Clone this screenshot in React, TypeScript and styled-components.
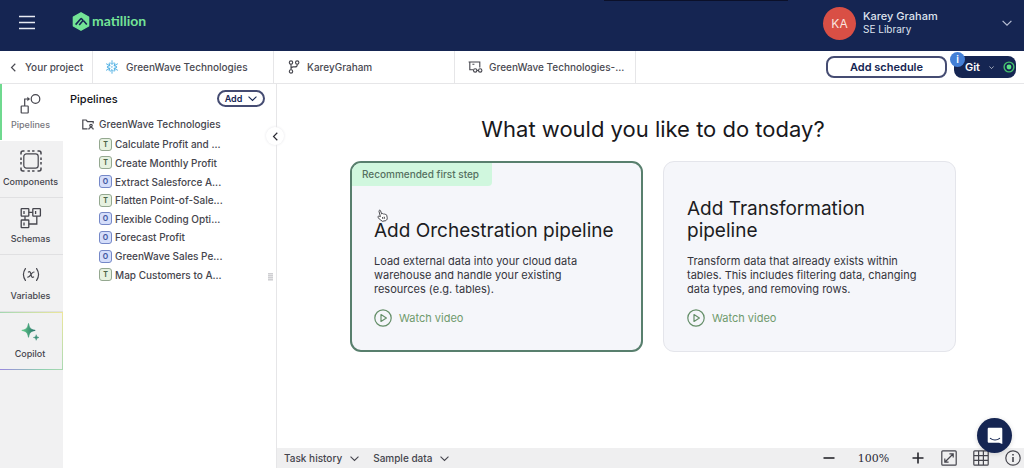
import React from "react";
import styled, { createGlobalStyle, css } from "styled-components";

const navy = "#152552";
const ink = "#2b2b35";
const line = "#e6e6e8";

const GlobalStyle = createGlobalStyle`
  *, *::before, *::after { box-sizing: border-box; }
  body { margin: 0; background: #fff; }
  body, button { font-family: Inter, "Liberation Sans", sans-serif; color: ${ink}; }
  button { margin: 0; padding: 0; border: 0; background: none; cursor: pointer; }
  h1, h2, p, ul { margin: 0; padding: 0; font-weight: 400; }
  ul { list-style: none; }
  a { text-decoration: none; }
  svg { display: block; flex: none; }
`;

const Page = styled.div`
  min-height: 100vh;
  display: flex;
  flex-direction: column;
`;

const Header = styled.header`
  position: relative;
  height: 51px;
  padding: 0 12px 5px 19px;
  display: flex;
  align-items: center;
  background: ${navy};
  color: #e4e8f2;
`;

const Notch = styled.span`
  position: absolute;
  top: 0;
  left: 59%;
  width: 18%;
  height: 1px;
  background: #0b1029;
`;

const Logo = styled.a`
  display: flex;
  align-items: center;
  gap: 2px;
  margin: 0 auto 4px 37px;
  color: #73e396;
  font: 700 14px/18px Lato, sans-serif;
`;

const Account = styled.button`
  display: flex;
  align-items: center;
  gap: 7px;
  color: #dfe3ee;
  text-align: left;
  font-size: 11px;
  line-height: 13px;
`;

const Avatar = styled.span`
  width: 33px;
  height: 33px;
  border-radius: 50%;
  background: #d94f45;
  color: #fbe3df;
  font-size: 12px;
  line-height: 33px;
  text-align: center;
`;

const AccountText = styled.span`
  width: 132px;
`;

const AccountName = styled.span`
  display: block;
  font-weight: 500;
`;

const AccountOrg = styled.span`
  display: block;
  font-size: 10px;
`;

const Toolbar = styled.nav`
  height: 33px;
  display: flex;
  align-items: center;
  border-bottom: 1px solid ${line};
  padding-right: 8px;
`;

const Crumb = styled.a<{ $w: number; $gap: number; $pad: number }>`
  width: ${(p) => p.$w}px;
  align-self: stretch;
  display: flex;
  align-items: center;
  gap: ${(p) => p.$gap}px;
  padding-left: ${(p) => p.$pad}px;
  border-right: 1px solid ${line};
  font-size: 10px;
  font-weight: 500;
  white-space: nowrap;
  color: #4a4a52;
`;

const Actions = styled.div`
  margin-left: auto;
  display: flex;
  gap: 7px;
`;

const ScheduleButton = styled.button`
  width: 121px;
  height: 22px;
  border: 2px solid #454c72;
  border-radius: 8px;
  color: ${navy};
  font-size: 11px;
  font-weight: 600;
`;

const GitButton = styled.button`
  position: relative;
  width: 62px;
  height: 22px;
  padding: 0 1px 0 11px;
  display: flex;
  align-items: center;
  justify-content: space-between;
  border-radius: 8px;
  background: ${navy};
  color: #fff;
  font-size: 11px;
  font-weight: 600;
`;

const InfoBadge = styled.span`
  position: absolute;
  left: -4px;
  top: -4px;
  width: 15px;
  height: 15px;
  border-radius: 50%;
  background: #437fd6;
  color: #fff;
  font-size: 10px;
  line-height: 15px;
  text-align: center;
`;

const Body = styled.div`
  flex: 1;
  display: flex;
`;

const Rail = styled.nav`
  width: 63px;
  flex: none;
  display: flex;
  flex-direction: column;
  background: #f1f1f2;
`;

const RailItem = styled.button<{ $kind?: "active" | "copilot" }>`
  height: 57px;
  display: flex;
  flex-direction: column;
  align-items: center;
  justify-content: space-between;
  padding: 9px 2px 9px 0;
  border-bottom: 1px solid #e0e0e2;
  font-size: 9px;
  font-weight: 500;
  line-height: 12px;
  color: #45454d;
  ${(p) =>
    p.$kind === "active" &&
    css`
      background: #fff;
      color: #77777d;
      border-bottom-color: #fff;
      box-shadow: inset 2px 0 #6fd98f;
    `}
  ${(p) =>
    p.$kind === "copilot" &&
    css`
      height: 58px;
      border: 1px solid;
      border-left: 0;
      border-image: linear-gradient(45deg, #9a86e0, #8fd0b0 35%, #b5dcb0 60%, #eee79a) 1;
    `}
`;

const Side = styled.aside`
  position: relative;
  width: 214px;
  flex: none;
  padding: 6px 11px 0 7px;
  border-right: 1px solid ${line};
`;

const SideHead = styled.div`
  display: flex;
  align-items: center;
  justify-content: space-between;
  height: 17px;
`;

const SideTitle = styled.h2`
  font-size: 11px;
  font-weight: 500;
  line-height: 14px;
  color: #111118;
`;

const AddButton = styled.button`
  width: 48px;
  height: 17px;
  display: flex;
  align-items: center;
  justify-content: center;
  gap: 6px;
  border: 2px solid #454c72;
  border-radius: 9px;
  color: ${navy};
  font-size: 9px;
  font-weight: 600;
`;

const Folder = styled.div`
  display: flex;
  align-items: center;
  gap: 5px;
  padding-left: 12px;
  margin-top: 9px;
  font-size: 10px;
  font-weight: 500;
  line-height: 16px;
  color: #45454d;
`;

const FileList = styled.ul`
  display: grid;
  grid-auto-rows: 1fr;
  height: 149px;
  margin-top: 3px;
  padding-left: 29px;
`;

const FileRow = styled.li`
  display: flex;
  align-items: center;
  gap: 3px;
  font-size: 10px;
  font-weight: 500;
  color: #45454d;
  white-space: nowrap;
`;

const Kind = styled.span<{ $orch: boolean }>`
  width: 13px;
  height: 13px;
  border: 1px solid ${(p) => (p.$orch ? "#7588c8" : "#94a890")};
  border-radius: 3px;
  background: ${(p) => (p.$orch ? "#d5defa" : "#e6f1e0")};
  color: ${(p) => (p.$orch ? "#4257a0" : "#4d6549")};
  font-size: 7px;
  font-weight: 700;
  line-height: 11px;
  text-align: center;
`;

const Collapse = styled.button`
  position: absolute;
  right: -8px;
  top: 43px;
  width: 18px;
  height: 18px;
  display: grid;
  place-items: center;
  border-radius: 50%;
  background: #fff;
  box-shadow: 0 0 3px #e4e4e8;
`;

const Grip = styled.span`
  position: absolute;
  right: 3px;
  top: 189px;
  width: 5px;
  height: 8px;
  background: repeating-linear-gradient(#cfcfd2 0 1px, #e4e4e6 1px 2px);
`;

const Main = styled.main`
  flex: 1;
  min-width: 0;
  display: flex;
  flex-direction: column;
`;

const Canvas = styled.section`
  flex: 1;
  display: flex;
  flex-direction: column;
  align-items: center;
  padding: 31px 0 24px 5px;
`;

const Question = styled.h1`
  font-size: 22px;
  line-height: 28px;
  color: #18181c;
`;

const Cards = styled.div`
  display: grid;
  grid-template-columns: 293px 293px;
  gap: 20px;
  margin-top: 18px;
`;

const Card = styled.article<{ $recommended?: boolean }>`
  position: relative;
  display: flex;
  flex-direction: column;
  justify-content: flex-end;
  min-height: 191px;
  padding: 35px 19px 24px 23px;
  border: 1px solid #e4e5eb;
  border-radius: 11px;
  background: #f5f6fa;
  ${(p) =>
    p.$recommended &&
    css`
      padding: 34px 18px 23px 22px;
      border: 2px solid #587f6d;
    `}
`;

const Ribbon = styled.span`
  position: absolute;
  left: 0;
  top: 0;
  padding: 0 13px 0 10px;
  border-radius: 9px 0 4px 0;
  background: #d0f7de;
  color: #557061;
  font-size: 10px;
  font-weight: 500;
  line-height: 23px;
  white-space: nowrap;
`;

const Pointer = styled.svg`
  position: absolute;
  left: 25px;
  top: 46px;
`;

const CardTitle = styled.h2`
  font-size: 19px;
  line-height: 22px;
  color: #1c1c22;
`;

const CardText = styled.p`
  margin-top: 12px;
  font-size: 11px;
  line-height: 14px;
  color: #34343c;
`;

const Watch = styled.a`
  display: flex;
  align-items: center;
  gap: 7px;
  margin-top: 13px;
  font-size: 11px;
  line-height: 18px;
  color: #6f9a6c;
`;

const Footer = styled.footer`
  height: 20px;
  display: flex;
  align-items: center;
  padding: 0 3px 0 7px;
  background: #efeff0;
`;

const FooterTab = styled.button`
  display: flex;
  align-items: center;
  gap: 8px;
  margin-right: 14px;
  font-size: 10px;
  font-weight: 500;
  color: #45454d;
`;

const Tools = styled.div`
  margin-left: auto;
  display: flex;
  align-items: center;
`;

const Zoom = styled.output`
  width: 77px;
  text-align: center;
  font: 11px "DejaVu Serif", serif;
`;

const Tool = styled.button<{ $ml?: number }>`
  margin-left: ${(p) => p.$ml || 0}px;
`;

const Chat = styled.button`
  position: fixed;
  right: 12px;
  bottom: 15px;
  width: 35px;
  height: 35px;
  display: grid;
  place-items: center;
  border-radius: 50%;
  background: ${navy};
  box-shadow: 0 1px 5px rgba(0, 0, 0, 0.15);
`;

const Chevron = ({ w = 9, dir = "down", color = "currentColor" }: { w?: number; dir?: "down" | "left"; color?: string }) =>
  dir === "down" ? (
    <svg width={w} height={w} viewBox="0 0 10 10" fill="none" stroke={color} strokeWidth="1.2">
      <path d="M0.6 2.8 5 7.2 9.4 2.8" />
    </svg>
  ) : (
    <svg width={w} height={w} viewBox="0 0 10 10" fill="none" stroke={color} strokeWidth="1.3">
      <path d="M7 0.8 2.8 5 7 9.2" />
    </svg>
  );

const stroke = { fill: "none", stroke: "#45454d", strokeWidth: 1.2 } as const;

const HexLogo = () => (
  <svg width="18" height="19" viewBox="0 0 18 19">
    <path d="M9 .8 16.6 5v9L9 18.2 1.4 14V5Z" fill="#73e396" stroke="#73e396" strokeWidth="1.4" strokeLinejoin="round" />
    <path d="m3.600 12.600 5-5.600q.6-.6 1.200 0l1.200 1.300M7.200 13l3.400-4q.6-.6 1.200 0l3 3.600" fill="none" stroke={navy} strokeWidth="1.600" strokeLinejoin="round" />
  </svg>
);

const Snowflake = () => (
  <svg width="14" height="14" viewBox="0 0 14 14" fill="none" stroke="#58b4e5" strokeWidth="1" strokeLinecap="round">
    {[0, 60, 120, 180, 240, 300].map((a) => (
      <path key={a} d="M7 .7v3M5.200 2.700 7 4.500l1.800-1.800" transform={`rotate(${a} 7 7)`} />
    ))}
    <path d="m7 6.300.7.7-.7.7-.7-.7Z" strokeWidth=".6" />
  </svg>
);

const Branch = () => (
  <svg width="12" height="14" viewBox="0 0 12 14" {...stroke} strokeWidth="1.1">
    <circle cx="3" cy="2.600" r="1.700" />
    <circle cx="9.200" cy="2.600" r="1.700" />
    <circle cx="3" cy="11.400" r="1.700" />
    <path d="M3 4.300v5.400M9.200 4.300v.6c0 1.600-1 2-2.400 2H5.200C3.800 6.900 3 7.600 3 9" />
  </svg>
);

const Environment = () => (
  <svg width="15" height="12" viewBox="0 0 15 12" {...stroke} strokeWidth="1.1">
    <path d="M.6 1h11.200v5.400M1.800 1v7.800H5M4.400 3.200h2" />
    <circle cx="7.200" cy="9.400" r="1.700" />
    <circle cx="12.200" cy="9.400" r="1.700" />
    <path d="M8.900 9.400h1.600" />
  </svg>
);

const FlowIcon = () => (
  <svg width="21" height="21" viewBox="0 0 21 21" {...stroke}>
    <circle cx="15.500" cy="6" r="4.300" />
    <rect x="1.200" y="13" width="7" height="7" rx=".5" />
    <path d="M4.700 13V6h4.500" />
    <path d="M7.400 3.800 10 6 7.400 8.200Z" fill="#45454d" stroke="none" />
  </svg>
);

const ComponentsIcon = () => (
  <svg width="22" height="22" viewBox="0 0 22 22" {...stroke}>
    <rect x="3.800" y="3.800" width="14.400" height="14.400" rx="2.600" />
    <path d="M1 4.500V3a2 2 0 0 1 2-2h1.500M7.500 1h2.400M12.100 1h2.400M17.500 1H19a2 2 0 0 1 2 2v1.500M21 7.500v2.400M21 12.100v2.400M21 17.500V19a2 2 0 0 1-2 2h-1.500M14.500 21h-2.400M9.900 21H7.500M4.500 21H3a2 2 0 0 1-2-2v-1.500M1 14.500v-2.400M1 9.900V7.500" strokeWidth="1.500" />
  </svg>
);

const SchemasIcon = () => (
  <svg width="22" height="22" viewBox="0 0 22 22" {...stroke} strokeWidth="1.300">
    <rect x="1.200" y="1.600" width="7.600" height="7.600" rx=".6" />
    <rect x="12.800" y="1.600" width="7.600" height="7.600" rx=".6" />
    <rect x="1.200" y="13" width="7.600" height="7.600" rx=".6" />
    <path d="M8.800 5.400h4M5 9.200V13M8.800 17h8V9.200M4 4v3M15.600 4v3M4 15.400v3" />
  </svg>
);

const VariablesIcon = () => (
  <svg width="20" height="20" viewBox="0 0 20 20" {...stroke} strokeLinecap="round">
    <path d="M4.400 4.600C2 8.200 2 12.800 4.400 16.400M15.600 4.600c2.400 3.600 2.400 8.200 0 11.800M7.400 8c1.600-.8 2.200.2 2.600 2.400s1 3.600 2.600 2.600M13 8c-2.200-.4-4 5.600-6.200 5.200" />
  </svg>
);

const SparkIcon = () => (
  <svg width="20" height="20" viewBox="0 0 20 20">
    <defs>
      <linearGradient id="spark" x1="0" x2="1">
        <stop offset="0" stopColor="#63cf8b" />
        <stop offset="1" stopColor="#256f68" />
      </linearGradient>
    </defs>
    <path d="M8.500 1.500c.9 4.600 2 5.900 6.700 6.900-4.700 1-5.800 2.300-6.700 6.900-.9-4.600-2-5.900-6.700-6.900 4.700-1 5.800-2.300 6.700-6.900Z" fill="url(#spark)" stroke="url(#spark)" strokeWidth=".8" strokeLinejoin="round" />
    <path d="M16.200 12.700c.4 1.900.9 2.400 2.800 2.800-1.900.4-2.400.9-2.800 2.800-.4-1.900-.9-2.400-2.800-2.800 1.900-.4 2.400-.9 2.800-2.800Z" fill="#3c8f78" stroke="#3c8f78" strokeWidth=".5" />
  </svg>
);

const FolderIcon = () => (
  <svg width="12" height="11" viewBox="0 0 12 11" {...stroke}>
    <path d="M5.500 9.800H.8V1h3.400l1.300 1.600h5.700v2" />
    <circle cx="9" cy="6.600" r="1.200" />
    <path d="M6.800 10.600c0-2.800 4.400-2.800 4.400 0" />
  </svg>
);

const PlayIcon = () => (
  <svg width="18" height="18" viewBox="0 0 18 18" fill="none" stroke="#648e68" strokeWidth="1.200" strokeLinejoin="round">
    <circle cx="9" cy="9" r="8.200" />
    <path d="M7 5.600v6.800L12.400 9Z" />
  </svg>
);

const files: [string, "T" | "O"][] = [
  ["Calculate Profit and ...", "T"],
  ["Create Monthly Profit", "T"],
  ["Extract Salesforce A...", "O"],
  ["Flatten Point-of-Sale...", "T"],
  ["Flexible Coding Opti...", "O"],
  ["Forecast Profit", "O"],
  ["GreenWave Sales Pe...", "O"],
  ["Map Customers to A...", "T"],
];

export default function App() {
  return (
    <Page>
      <GlobalStyle />
      <Header>
        <Notch />
        <button aria-label="Menu">
          <svg width="16" height="16" viewBox="0 0 16 16" stroke="#e8ebf3" strokeWidth="1.700">
            <path d="M0 1.500h16M0 7.500h16M0 13.500h16" />
          </svg>
        </button>
        <Logo href="#">
          <HexLogo />
          matillion
        </Logo>
        <Account>
          <Avatar>KA</Avatar>
          <AccountText>
            <AccountName>Karey Graham</AccountName>
            <AccountOrg>SE Library</AccountOrg>
          </AccountText>
          <Chevron w={10} color="#b9c0d4" />
        </Account>
      </Header>
      <Toolbar>
        <Crumb href="#" $w={93} $gap={7} $pad={9}>
          <Chevron dir="left" />
          Your project
        </Crumb>
        <Crumb href="#" $w={181} $gap={7} $pad={12}>
          <Snowflake />
          GreenWave Technologies
        </Crumb>
        <Crumb href="#" $w={181} $gap={7} $pad={14}>
          <Branch />
          KareyGraham
        </Crumb>
        <Crumb href="#" $w={181} $gap={6} $pad={13}>
          <Environment />
          GreenWave Technologies-...
        </Crumb>
        <Actions>
          <ScheduleButton>Add schedule</ScheduleButton>
          <GitButton>
            <InfoBadge>i</InfoBadge>
            Git
            <Chevron w={5} />
            <svg width="12" height="12" viewBox="0 0 12 12">
              <circle cx="6" cy="6" r="4.900" fill="none" stroke="#46c06c" strokeWidth="1.400" />
              <circle cx="6" cy="6" r="2.400" fill="#5be584" />
            </svg>
          </GitButton>
        </Actions>
      </Toolbar>
      <Body>
        <Rail>
          <RailItem $kind="active">
            <FlowIcon />
            Pipelines
          </RailItem>
          <RailItem>
            <ComponentsIcon />
            Components
          </RailItem>
          <RailItem>
            <SchemasIcon />
            Schemas
          </RailItem>
          <RailItem>
            <VariablesIcon />
            Variables
          </RailItem>
          <RailItem $kind="copilot">
            <SparkIcon />
            Copilot
          </RailItem>
        </Rail>
        <Side>
          <SideHead>
            <SideTitle>Pipelines</SideTitle>
            <AddButton>
              Add
              <Chevron />
            </AddButton>
          </SideHead>
          <Folder>
            <FolderIcon />
            GreenWave Technologies
          </Folder>
          <FileList>
            {files.map(([name, kind]) => (
              <FileRow key={name}>
                <Kind $orch={kind === "O"}>{kind}</Kind>
                {name}
              </FileRow>
            ))}
          </FileList>
          <Collapse aria-label="Collapse panel">
            <Chevron dir="left" />
          </Collapse>
          <Grip />
        </Side>
        <Main>
          <Canvas>
            <Question>What would you like to do today?</Question>
            <Cards>
              <Card $recommended>
                <Ribbon>Recommended first step</Ribbon>
                <Pointer width="11" height="13" viewBox="0 0 11 13" fill="#fff" stroke="#33333a" strokeWidth=".9" strokeLinejoin="round">
                  <path d="M3.400 7.600 2 2.400C1.800 1 3.200.700 3.600 1.900l1 3c.8-.6 1.500-.3 1.800.2.700-.4 1.400-.1 1.700.4.800-.3 1.400.1 1.600.8l.5 2.300c.2 1.500-.4 2.400-1.400 3l-3.400.7C4 11.400 2.600 10.200 1 8.600c-.6-1 .5-1.800 1.300-1.300Z" />
                  <path d="m5.500 8 .4 2M7.200 7.700l.4 2" />
                </Pointer>
                <CardTitle>Add Orchestration pipeline</CardTitle>
                <CardText>
                  Load external data into your cloud data
                  <br />
                  warehouse and handle your existing
                  <br />
                  resources (e.g. tables).
                </CardText>
                <Watch href="#">
                  <PlayIcon />
                  Watch video
                </Watch>
              </Card>
              <Card>
                <CardTitle>
                  Add Transformation
                  <br />
                  pipeline
                </CardTitle>
                <CardText>
                  Transform data that already exists within
                  <br />
                  tables. This includes filtering data, changing
                  <br />
                  data types, and removing rows.
                </CardText>
                <Watch href="#">
                  <PlayIcon />
                  Watch video
                </Watch>
              </Card>
            </Cards>
          </Canvas>
          <Footer>
            <FooterTab>
              Task history
              <Chevron />
            </FooterTab>
            <FooterTab>
              Sample data
              <Chevron />
            </FooterTab>
            <Tools>
              <Tool aria-label="Zoom out">
                <svg width="12" height="12" viewBox="0 0 12 12" stroke="#26262c" strokeWidth="1.600">
                  <path d="M.5 6h11" />
                </svg>
              </Tool>
              <Zoom>100%</Zoom>
              <Tool aria-label="Zoom in">
                <svg width="12" height="12" viewBox="0 0 12 12" stroke="#26262c" strokeWidth="1.600">
                  <path d="M.5 6h11M6 .5v11" />
                </svg>
              </Tool>
              <Tool aria-label="Fit to screen" $ml={17}>
                <svg width="16" height="16" viewBox="0 0 16 16" {...stroke}>
                  <rect x=".8" y=".8" width="14.400" height="14.400" rx="1" />
                  <path d="M4 12 12 4M8.400 3.800H12.200V7.600M3.800 8.400v3.800H7.600" />
                </svg>
              </Tool>
              <Tool aria-label="Grid" $ml={16}>
                <svg width="16" height="16" viewBox="0 0 16 16" {...stroke}>
                  <rect x=".8" y=".8" width="14.400" height="14.400" rx="1" />
                  <path d="M5.600 1v14M10.400 1v14M1 5.600h14M1 10.400h14" />
                </svg>
              </Tool>
              <Tool aria-label="Information" $ml={16}>
                <svg width="16" height="16" viewBox="0 0 16 16" {...stroke}>
                  <circle cx="8" cy="8" r="7.200" />
                  <path d="M8 7v5M8 4v1.600" strokeWidth="1.600" />
                </svg>
              </Tool>
            </Tools>
          </Footer>
        </Main>
      </Body>
      <Chat aria-label="Open chat">
        <svg width="16" height="18" viewBox="0 0 16 18">
          <path d="M2 .8h12c.8 0 1.300.5 1.300 1.300V17l-3.200-1.300H2c-.8 0-1.300-.5-1.300-1.300V2.100C.7 1.300 1.200.800 2 .800Z" fill="#fff" />
          <path d="M3.400 11.400c2.600 2.200 6.600 2.200 9.200 0" fill="none" stroke={navy} strokeWidth="1.100" strokeLinecap="round" />
        </svg>
      </Chat>
    </Page>
  );
}
